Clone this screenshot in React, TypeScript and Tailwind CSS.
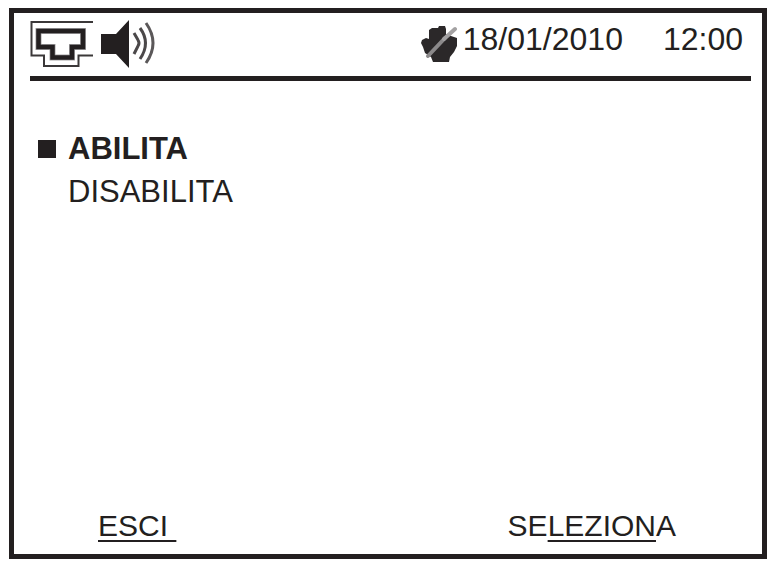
import clsx from "clsx";
import { useState } from "react";

const OPTIONS = ["ABILITA", "DISABILITA"];

function NetworkIcon() {
  return (
    <svg width="64" height="48" viewBox="0 0 64 48" fill="none" role="img" aria-label="Rete">
      <path d="M63 2H1.5V35.5H14V46H48.5V35.5H63" stroke="#3b3839" strokeWidth="2" />
      <path d="M8.5 11H53V27H42V37.5H22.5V27H8.5Z" stroke="#a5a3a4" strokeWidth="6" />
      <path d="M8.5 11H53V27H42V37.5H22.5V27H8.5Z" stroke="#231f20" strokeWidth="4.5" />
    </svg>
  );
}

function SpeakerIcon() {
  return (
    <svg width="56" height="48" viewBox="0 0 56 48" fill="none" role="img" aria-label="Audio">
      <path d="M1 14H16L29 0V48L16 34H1Z" fill="#231f20" />
      <path d="M34 13L38 20Q40 23 38 26L34 34" stroke="#4b4849" strokeWidth="3" />
      <path d="M40 8Q51 23 40 39" stroke="#4b4849" strokeWidth="3" />
      <path d="M46 3Q60 23 46 43" stroke="#5b5859" strokeWidth="3" />
    </svg>
  );
}

function HandIcon() {
  return (
    <svg width="36" height="38" viewBox="0 0 36 38" fill="none" role="img" aria-label="Non disturbare">
      <path
        d="M8 14V5L11 3H17L18 1H24L25 4V9L30 11L36 13V21L33 27L29 32L28 37H12L10 32L4 28L2 22L0 18L1 15L5 13Z"
        fill="#2b2829"
      />
      <path d="M7 31L24 13" stroke="#8b898a" strokeWidth="4" strokeLinecap="round" />
      <path d="M23 14L34 4" stroke="#a3a1a2" strokeWidth="4" strokeLinecap="round" />
    </svg>
  );
}

export default function App() {
  const [selected, setSelected] = useState("ABILITA");

  return (
    <div className="flex min-h-screen flex-col bg-white pt-2 pr-px pb-1.5 pl-[9px] font-['Liberation_Sans',Arial,sans-serif] text-[31px] leading-10 text-[#231f20]">
      <main className="flex flex-1 flex-col border-[5px] border-[#231f20]">
        <header className="mr-[11px] ml-4 flex h-[68px] items-start justify-between border-b-[5px] border-[#231f20] pt-1.5">
          <div className="flex gap-1.5 pt-px">
            <NetworkIcon />
            <SpeakerIcon />
          </div>
          <div className="flex items-start pr-2 text-[32px]">
            <span className="mt-1.5 mr-1.5">
              <HandIcon />
            </span>
            <time dateTime="2010-01-18">18/01/2010</time>
            <time dateTime="12:00" className="ml-10">
              12:00
            </time>
          </div>
        </header>

        <ul className="mt-[46px] ml-6">
          {OPTIONS.map((option) => (
            <li key={option}>
              <button
                type="button"
                aria-pressed={selected === option}
                onClick={() => setSelected(option)}
                className={clsx("flex h-[43px] items-center", selected === option && "font-bold")}
              >
                <span className={clsx("mr-3 h-[18px] w-[18px]", selected === option && "bg-[#231f20]")} />
                {option}
              </button>
            </li>
          ))}
        </ul>

        <footer className="mt-auto mb-2 flex justify-between pr-[86px] pl-[84px] text-[30px]">
          <button type="button" className="underline decoration-2 underline-offset-4">
            ESCI&nbsp;
          </button>
          <button type="button">
            SE<span className="underline decoration-2 underline-offset-4">LEZION</span>A
          </button>
        </footer>
      </main>
    </div>
  );
}
